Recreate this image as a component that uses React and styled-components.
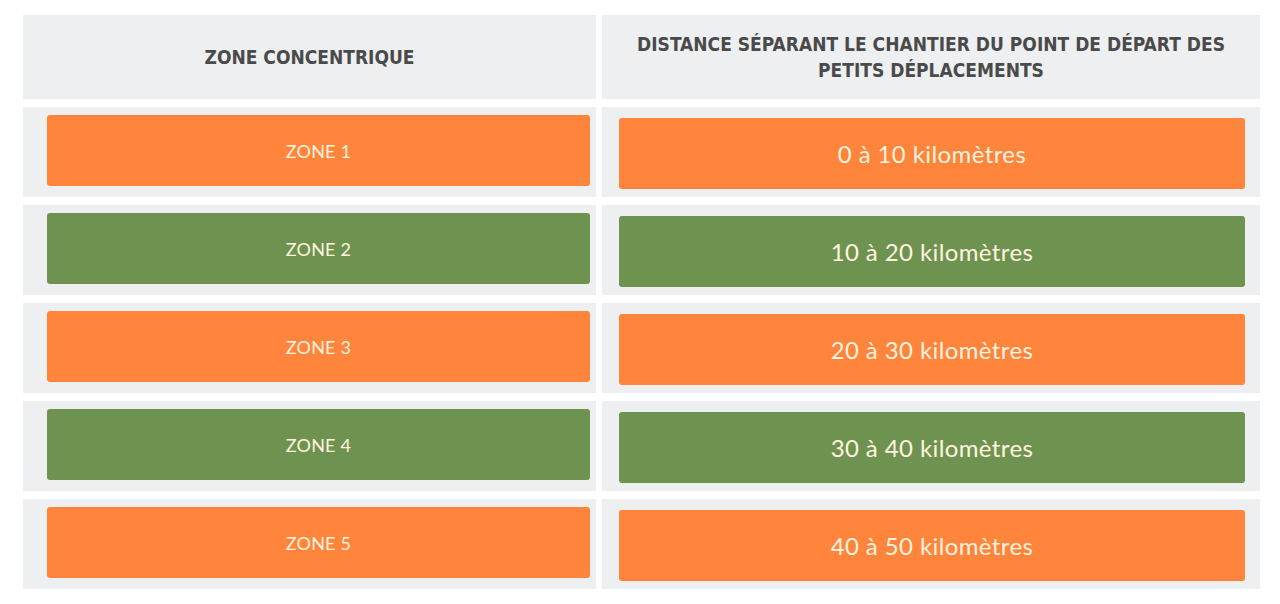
import React from "react";
import styled, { createGlobalStyle } from "styled-components";

const Global = createGlobalStyle`
  html, body { margin: 0; padding: 0; background: #ffffff; }
  body { font-family: "Lato", "Liberation Sans", sans-serif; }
`;

const Page = styled.div`
  width: 1280px;
  height: 604px;
  box-sizing: border-box;
  padding: 15px 0 0 23px;
  background: #ffffff;
`;

const Table = styled.div`
  display: grid;
  grid-template-columns: 573px 658px;
  grid-template-rows: 84px repeat(5, 90px);
  column-gap: 6px;
  row-gap: 8px;
`;

const HeadCell = styled.div`
  background: #eeeff1;
  display: flex;
  align-items: center;
  justify-content: center;
  text-align: center;
  padding: 0 30px;
  box-sizing: border-box;
  color: #4a4a4a;
  font-family: "DejaVu Sans Condensed", "DejaVu Sans", sans-serif;
  font-weight: 700;
  font-size: 19px;
  line-height: 26px;
  text-transform: uppercase;
`;

const Cell = styled.div`
  background: #eeeff1;
  box-sizing: border-box;
  padding: ${(p) => (p.$side === "left" ? "8px 6px 0 24px" : "11px 15px 0 17px")};
`;

const Pill = styled.div`
  height: 71px;
  border-radius: 3px;
  background: ${(p) => (p.$tone === "green" ? "#6e9350" : "#ff843c")};
  color: #fff3df;
  display: flex;
  align-items: center;
  justify-content: center;
  font-family: "Lato", "Liberation Sans", sans-serif;
  font-weight: 400;
  font-size: ${(p) => (p.$side === "left" ? "18px" : "24px")};
  letter-spacing: ${(p) => (p.$side === "left" ? "0.2px" : "0.4px")};
`;

const rows = [
  { zone: "ZONE 1", dist: "0 à 10 kilomètres", tone: "orange" },
  { zone: "ZONE 2", dist: "10 à 20 kilomètres", tone: "green" },
  { zone: "ZONE 3", dist: "20 à 30 kilomètres", tone: "orange" },
  { zone: "ZONE 4", dist: "30 à 40 kilomètres", tone: "green" },
  { zone: "ZONE 5", dist: "40 à 50 kilomètres", tone: "orange" },
];

export default function App() {
  return (
    <Page>
      <Global />
      <Table>
        <HeadCell>Zone concentrique</HeadCell>
        <HeadCell>Distance séparant le chantier du point de départ des petits déplacements</HeadCell>
        {rows.map((r) => (
          <React.Fragment key={r.zone}>
            <Cell $side="left">
              <Pill $side="left" $tone={r.tone}>{r.zone}</Pill>
            </Cell>
            <Cell $side="right">
              <Pill $side="right" $tone={r.tone}>{r.dist}</Pill>
            </Cell>
          </React.Fragment>
        ))}
      </Table>
    </Page>
  );
}
